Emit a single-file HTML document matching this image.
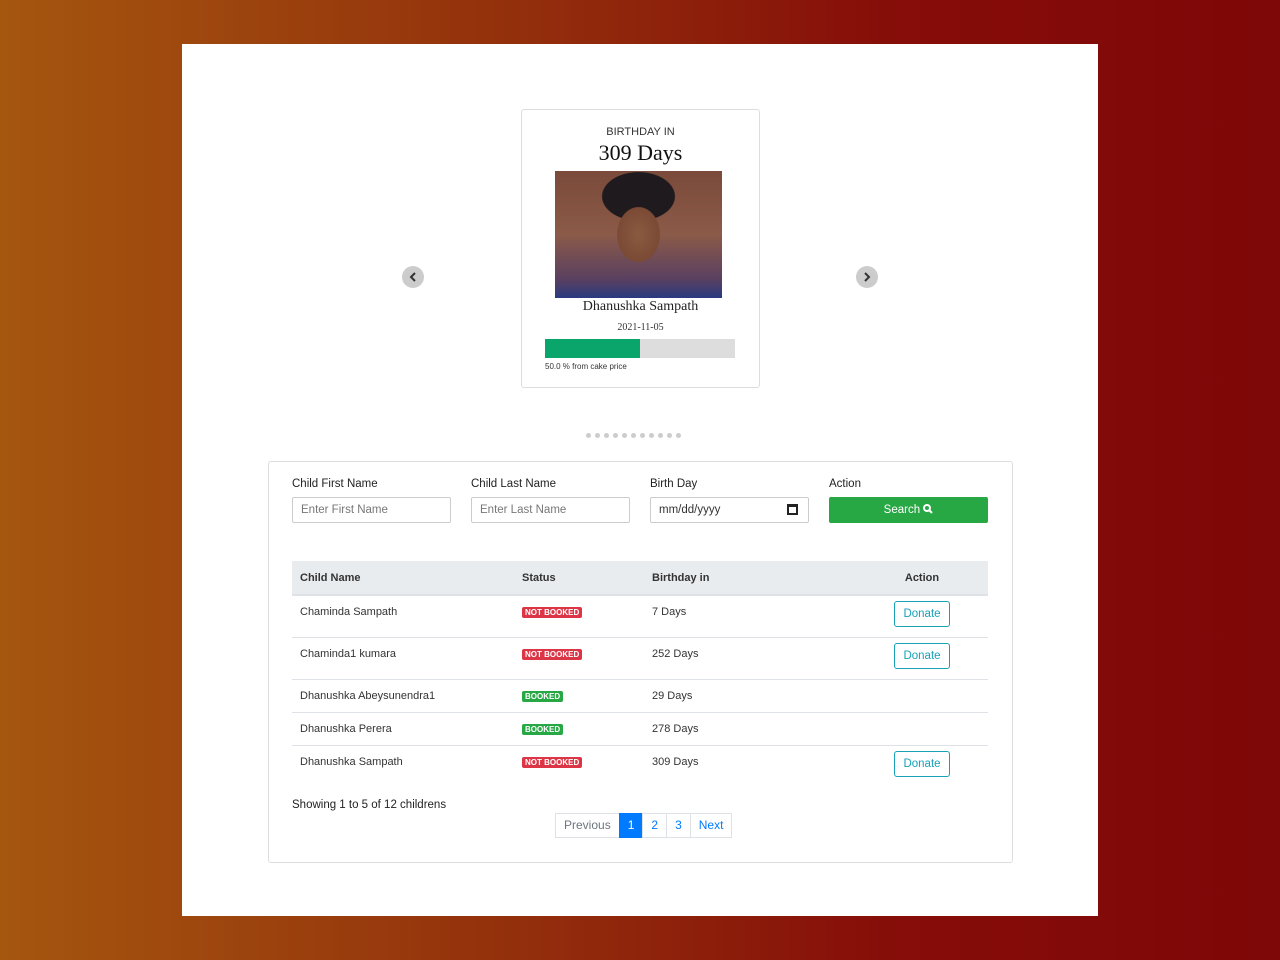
<!DOCTYPE html>
<html><head><meta charset="utf-8"><style>
*{box-sizing:border-box;margin:0;padding:0}
body{width:1280px;height:960px;background:linear-gradient(90deg,#a5560f 0%,#93300c 40%,#860d09 70%,#7e0707 100%);font-family:"Liberation Sans",sans-serif;position:relative;overflow:hidden}
.page{position:absolute;left:182px;top:44px;width:916px;height:872px;background:#fff}
.abs{position:absolute}
.card{left:339px;top:65px;width:239px;height:279px;border:1px solid #ddd;border-radius:3px}
.serif{font-family:"Liberation Serif",serif}
.arrow{width:22px;height:22px;border-radius:50%;background:#ccc;}
.dot{width:5px;height:5px;border-radius:50%;background:#ccc;display:inline-block;margin-right:4px}
.form{left:86px;top:417px;width:745px;height:402px;border:1px solid #ddd;border-radius:3px}
label{position:absolute;font-size:11.5px;color:#222}
.inp{position:absolute;height:26px;width:159px;border:1px solid #ccc;border-radius:2px;font-size:11.5px;color:#777;padding:6px 8px}
table{position:absolute;left:23px;top:99px;width:696px;border-collapse:collapse;font-size:11px;color:#333;table-layout:fixed}
th{background:#e9ecef;text-align:left;height:34px;padding-left:8px;font-weight:bold;border-bottom:2px solid #dee2e6}
td{padding-left:8px;border-bottom:1px solid #dee2e6;vertical-align:top;padding-top:10px}
.b{display:inline-block;font-size:8px;font-weight:bold;color:#fff;padding:1px 3px;border-radius:2px}
.nb{background:#dc3545}.bk{background:#28a745}
.don{display:inline-block;border:1px solid #17a2b8;color:#17a2b8;border-radius:3px;padding:6px 8px;font-size:11.5px;margin-top:-2px}
.act{text-align:center;padding-left:0;padding-right:8px;padding-top:7px}
.pg{position:absolute;top:351px;left:287px;display:flex;font-size:12px}
.pg span{border:1px solid #dee2e6;height:25px;line-height:23px;padding:0 8px;color:#007bff;margin-left:-1px}
</style></head><body>
<div class="page">
<div class="abs card">
 <div class="abs" style="top:16px;width:100%;text-align:center;font-size:11px;color:#333">BIRTHDAY IN</div>
 <div class="abs serif" style="top:30px;width:100%;text-align:center;font-size:22px;color:#111">309 Days</div>
 <div class="abs" style="left:33px;top:61px;width:167px;height:127px;background:radial-gradient(ellipse 35px 45px at 50% 50%,#8a5a40 0%,#7a4a35 60%,transparent 62%),radial-gradient(ellipse 45px 30px at 50% 20%,#1e1a1e 0%,#1e1a1e 80%,transparent 82%),linear-gradient(180deg,#7a4a3a 0%,#8b5a48 50%,#5a4060 85%,#2a3a80 100%)"></div>
 <div class="abs serif" style="top:189px;width:100%;text-align:center;font-size:14px;color:#222">Dhanushka Sampath</div>
 <div class="abs serif" style="top:212px;width:100%;text-align:center;font-size:10px;color:#333">2021-11-05</div>
 <div class="abs" style="left:23px;top:229px;width:190px;height:19px;background:#ddd"><div style="width:95px;height:19px;background:#0aa56a"></div></div>
 <div class="abs" style="left:23px;top:252px;font-size:8px;color:#333">50.0 % from cake price</div>
</div>
<div class="abs arrow" style="left:220px;top:222px"><svg width="22" height="22"><path d="M13 7l-4 4 4 4" stroke="#333" stroke-width="2" fill="none"/></svg></div>
<div class="abs arrow" style="left:674px;top:222px"><svg width="22" height="22"><path d="M9 7l4 4-4 4" stroke="#333" stroke-width="2" fill="none"/></svg></div>
<div class="abs" style="left:404px;top:389px;line-height:0"><span class="dot"></span><span class="dot"></span><span class="dot"></span><span class="dot"></span><span class="dot"></span><span class="dot"></span><span class="dot"></span><span class="dot"></span><span class="dot"></span><span class="dot"></span><span class="dot"></span></div>
<div class="abs form">
 <label style="left:23px;top:16px">Child First Name</label>
 <label style="left:202px;top:16px">Child Last Name</label>
 <label style="left:381px;top:16px">Birth Day</label>
 <label style="left:560px;top:16px">Action</label>
 <div class="inp" style="left:23px;top:35px">Enter First Name</div>
 <div class="inp" style="left:202px;top:35px">Enter Last Name</div>
 <div class="inp" style="left:381px;top:35px;color:#333">mm/dd/yyyy<span style="position:absolute;right:10px;top:6px;width:11px;height:11px;border:2px solid #222;border-top-width:3px"></span></div>
 <div class="inp" style="left:560px;top:35px;background:#28a745;border-color:#28a745;color:#fff;text-align:center">Search <svg width="10" height="10" style="vertical-align:-1px"><circle cx="4" cy="4" r="3" stroke="#fff" stroke-width="2" fill="none"/><path d="M6 6l3 3" stroke="#fff" stroke-width="2"/></svg></div>
 <table>
  <tr><th style="width:222px">Child Name</th><th style="width:130px">Status</th><th style="width:220px">Birthday in</th><th style="text-align:center;padding:0 8px 0 0;width:124px">Action</th></tr>
  <tr style="height:42px"><td>Chaminda Sampath</td><td><span class="b nb">NOT BOOKED</span></td><td>7 Days</td><td class="act"><span class="don">Donate</span></td></tr>
  <tr style="height:42px"><td>Chaminda1 kumara</td><td><span class="b nb">NOT BOOKED</span></td><td>252 Days</td><td class="act"><span class="don">Donate</span></td></tr>
  <tr style="height:33px"><td>Dhanushka Abeysunendra1</td><td><span class="b bk">BOOKED</span></td><td>29 Days</td><td></td></tr>
  <tr style="height:33px"><td>Dhanushka Perera</td><td><span class="b bk">BOOKED</span></td><td>278 Days</td><td></td></tr>
  <tr style="height:42px"><td style="border:0">Dhanushka Sampath</td><td style="border:0"><span class="b nb">NOT BOOKED</span></td><td style="border:0">309 Days</td><td class="act" style="border:0"><span class="don">Donate</span></td></tr>
 </table>
 <div class="abs" style="left:23px;top:337px;font-size:11.5px;color:#222">Showing 1 to 5 of 12 childrens</div>
 <div class="pg"><span style="color:#6c757d">Previous</span><span style="background:#007bff;color:#fff;border-color:#007bff">1</span><span>2</span><span>3</span><span>Next</span></div>
</div>
</div>
</body></html>
